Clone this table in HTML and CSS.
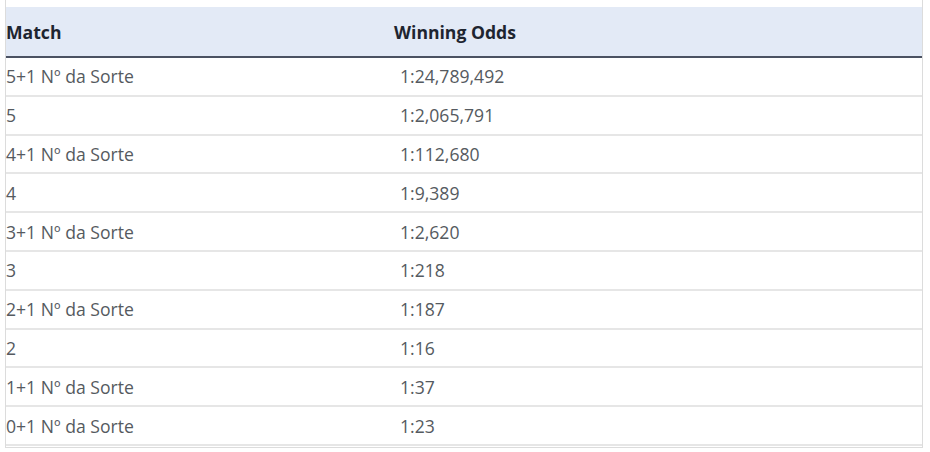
FILE: index.html
```html
<!DOCTYPE html>
<html>
<head>
<meta charset="utf-8">
<link rel="stylesheet" href="styles.css">
</head>
<body>
<div class="frame">
  <table class="odds">
    <thead>
      <tr><th class="c1">Match</th><th class="c2">Winning Odds</th></tr>
    </thead>
    <tbody>
      <tr><td class="c1">5+1 Nº da Sorte</td><td class="c2">1:24,789,492</td></tr>
      <tr><td class="c1">5</td><td class="c2">1:2,065,791</td></tr>
      <tr><td class="c1">4+1 Nº da Sorte</td><td class="c2">1:112,680</td></tr>
      <tr><td class="c1">4</td><td class="c2">1:9,389</td></tr>
      <tr><td class="c1">3+1 Nº da Sorte</td><td class="c2">1:2,620</td></tr>
      <tr><td class="c1">3</td><td class="c2">1:218</td></tr>
      <tr><td class="c1">2+1 Nº da Sorte</td><td class="c2">1:187</td></tr>
      <tr><td class="c1">2</td><td class="c2">1:16</td></tr>
      <tr><td class="c1">1+1 Nº da Sorte</td><td class="c2">1:37</td></tr>
      <tr><td class="c1">0+1 Nº da Sorte</td><td class="c2">1:23</td></tr>
    </tbody>
  </table>
</div>
</body>
</html>
```
FILE: styles.css
```css
html, body {
  margin: 0;
  padding: 0;
  background: #ffffff;
}
body {
  font-family: "Open Sans", "Liberation Sans", sans-serif;
  font-size: 17.6px;
  line-height: 24px;
}
.frame {
  margin-left: 5px;
  width: 916px;
  padding-top: 7px;
  padding-bottom: 1px;
  border-left: 1px solid #dcdcdc;
  border-right: 1px solid #dcdcdc;
  border-bottom: 1px solid #dcdcdc;
}
.odds {
  width: 100%;
  border-collapse: collapse;
  table-layout: fixed;
}
.odds th {
  background: #e3eaf6;
  color: #1e2530;
  font-weight: 700;
  text-align: left;
  height: 50px;
  padding: 0;
  box-sizing: border-box;
  border-bottom: 2px solid #4b5262;
  vertical-align: middle;
}
.odds th.c1 {
  width: 388px;
}
.odds td {
  color: #555a60;
  height: 38.8px;
  padding: 0;
  box-sizing: border-box;
  border-bottom: 2px solid #e6e6e6;
  vertical-align: middle;
}
.odds tbody tr {
  height: 38.8px;
}
.odds td.c2 {
  padding-left: 6px;
}
```
